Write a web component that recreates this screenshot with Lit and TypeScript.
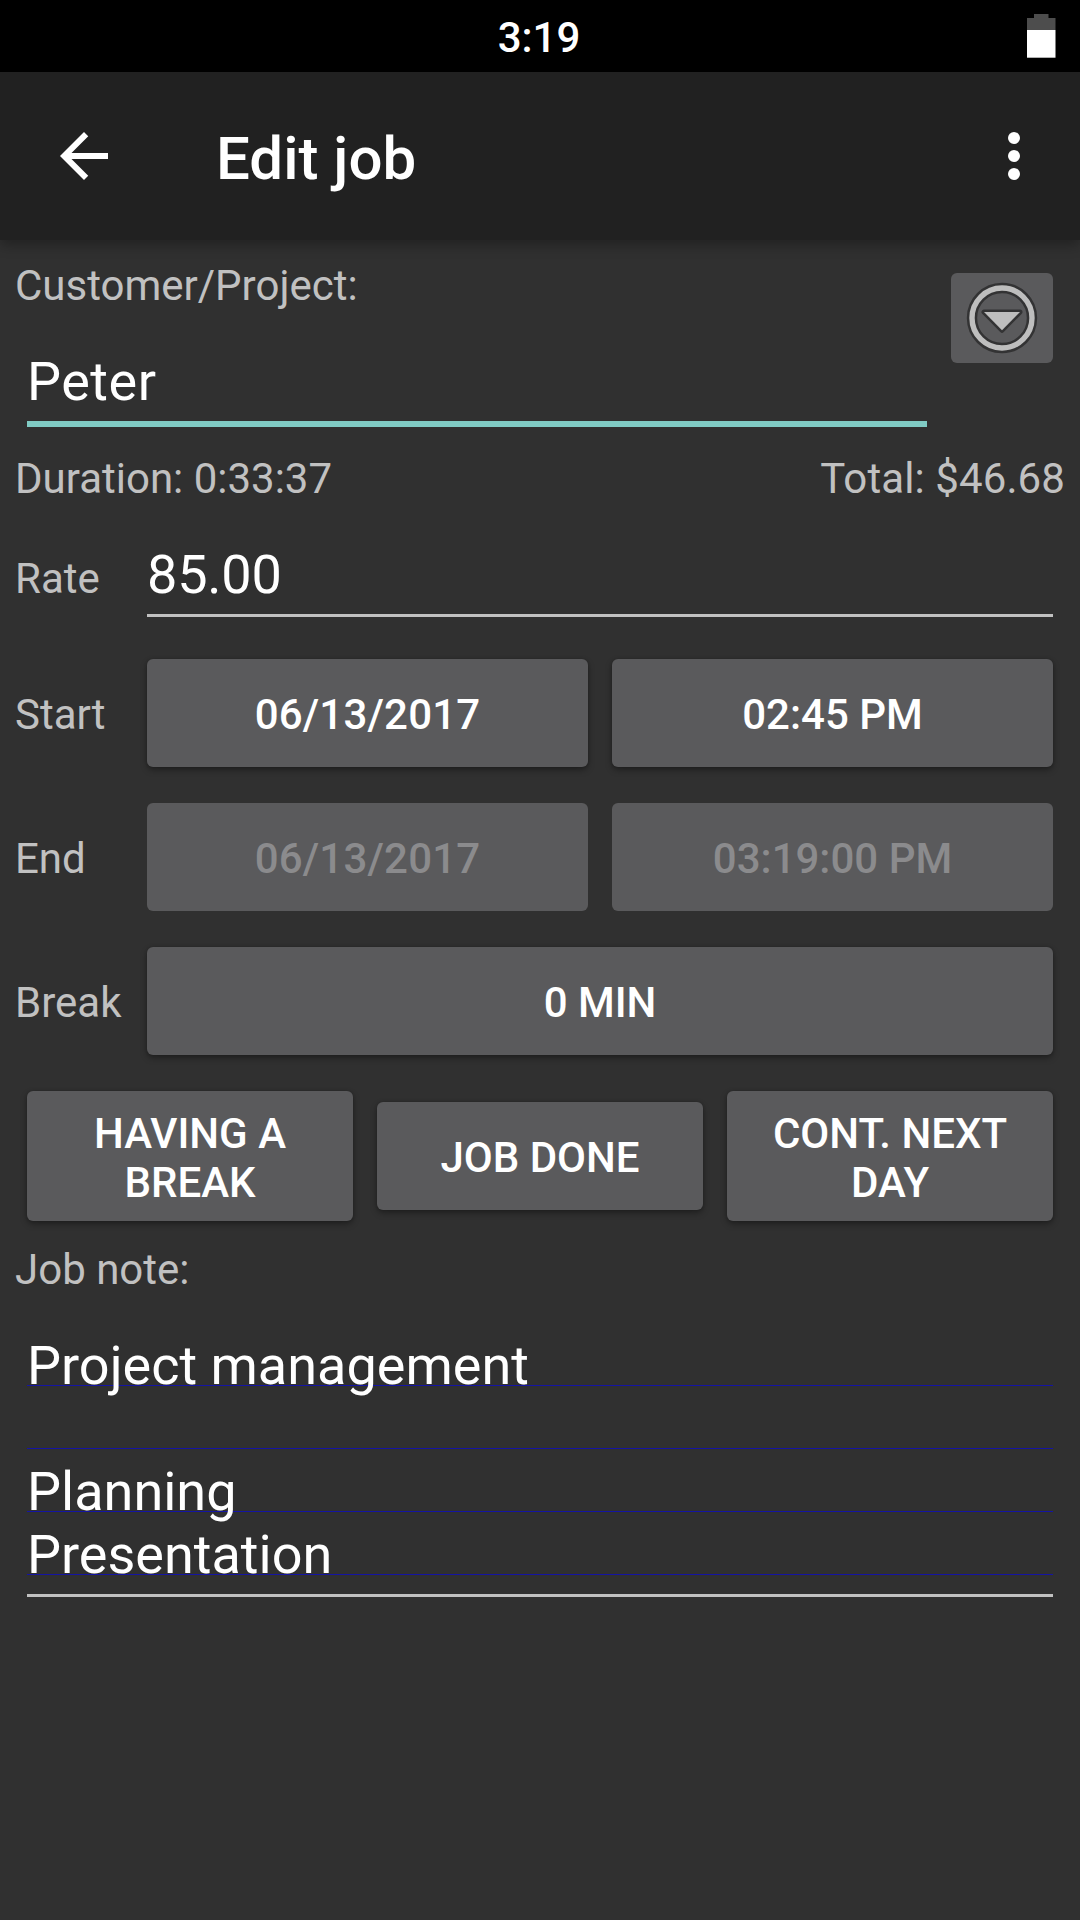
import { LitElement, html, css, svg } from "lit";
import { customElement, property, state } from "lit/decorators.js";
import { classMap } from "lit/directives/class-map.js";

@customElement("status-bar")
class StatusBar extends LitElement {
  @property() time = "";

  static styles = css`
    :host {
      display: grid;
      grid-template-columns: 1fr auto 1fr;
      height: 72px;
      background: #000;
      color: #fff;
      font-weight: 500;
      line-height: 49px;
    }
    .time {
      grid-column: 2;
      padding: 13px 2px 0 0;
    }
    .battery {
      justify-self: end;
      margin: 14px 24px 0 0;
      width: 29px;
      height: 44px;
    }
  `;

  render() {
    return html`
      <span class="time">${this.time}</span>
      <svg class="battery" viewBox="0 0 29 44">
        <path fill="#4d4d4d" d="M7 0h14.5v4h7v12H0V4h7z" />
        <path fill="#fff" d="M0 16h28.5v27.7H0z" />
      </svg>
    `;
  }
}

@customElement("app-bar")
class AppBar extends LitElement {
  @property() heading = "";

  static styles = css`
    :host {
      display: flex;
      align-items: flex-start;
      height: 168px;
      background: #212121;
      color: #fff;
      box-shadow: 0 5px 12px rgba(0, 0, 0, 0.3);
    }
    .icon {
      width: 72px;
      height: 72px;
      margin-top: 48px;
      fill: #fff;
    }
    .back {
      margin-left: 48px;
    }
    .more {
      margin-right: 30px;
    }
    .heading {
      flex: 1;
      margin: 51px 0 0 96px;
      font-size: 60px;
      line-height: 71px;
      font-weight: 500;
    }
  `;

  render() {
    return html`
      <svg class="icon back" viewBox="0 0 24 24">
        <path d="M20 11H7.83l5.59-5.59L12 4l-8 8 8 8 1.41-1.41L7.83 13H20v-2z" />
      </svg>
      <span class="heading">${this.heading}</span>
      <svg class="icon more" viewBox="0 0 24 24">
        ${[6, 12, 18].map((y) => svg`<circle cx="12" cy=${y} r="2" />`)}
      </svg>
    `;
  }
}

@customElement("raised-button")
class RaisedButton extends LitElement {
  @property() label = "";
  @property({ type: Boolean }) disabled = false;

  static styles = css`
    :host {
      display: block;
      flex: 1 1 0;
      min-width: 0;
    }
    .button {
      display: flex;
      align-items: flex-start;
      box-sizing: border-box;
      width: 100%;
      min-height: 108px;
      margin: 0;
      padding: 18px 36px 14px;
      border: 0;
      border-radius: 6px;
      background: #5a5a5c;
      color: #fff;
      font: inherit;
      font-weight: 500;
      line-height: 49px;
      text-align: center;
      text-transform: uppercase;
      box-shadow: 0 3px 6px rgba(0, 0, 0, 0.35), 0 0 3px rgba(0, 0, 0, 0.15);
    }
    .text {
      flex: 1;
      display: flex;
      flex-direction: column;
      justify-content: center;
      min-height: 75px;
    }
    .date {
      letter-spacing: 0.2px;
    }
    .disabled {
      color: #8b8b8d;
      box-shadow: none;
    }
  `;

  render() {
    return html`
      <button
        class=${classMap({ button: true, disabled: this.disabled })}
        ?disabled=${this.disabled}
      >
        <span class=${classMap({ text: true, date: this.label.includes("/") })}>${this.label}</span>
      </button>
    `;
  }
}

interface Row {
  name: string;
  buttons: string[];
  disabled?: boolean;
}

@customElement("app-root")
class AppRoot extends LitElement {
  @state() private rows: Row[] = [
    { name: "Start", buttons: ["06/13/2017", "02:45 PM"] },
    { name: "End", buttons: ["06/13/2017", "03:19:00 PM"], disabled: true },
    { name: "Break", buttons: ["0 min"] },
  ];

  @state() private actions = ["Having a break", "Job done", "Cont. next day"];

  @state() private note = ["Project management", "", "Planning", "Presentation"];

  static styles = css`
    :host {
      display: block;
      width: 1080px;
      height: 1920px;
      overflow: hidden;
      background: #303030;
      color: #c1c1c1;
      font-family: Roboto, "Liberation Sans", sans-serif;
      font-size: 42px;
      line-height: 49px;
    }
    .customer {
      display: flex;
      justify-content: space-between;
      padding: 21px 27px 0 15px;
    }
    .customer-field {
      width: 912px;
    }
    .value {
      color: #fff;
      font-size: 54px;
      line-height: 63px;
      padding-bottom: 8px;
      border-bottom: 3px solid #c1c1c1;
    }
    .focused {
      margin: 40px 0 0 12px;
      border-bottom: 6px solid #80cbc4;
      letter-spacing: 0.5px;
    }
    .picker {
      width: 102px;
      height: 90px;
      margin-top: 12px;
      border-radius: 6px;
      background: #5a5a5c;
    }
    .summary {
      display: flex;
      justify-content: space-between;
      padding: 27px 15px 0;
    }
    .total {
      letter-spacing: 0.1px;
    }
    .row {
      display: flex;
      padding: 0 27px 0 15px;
    }
    .name {
      width: 132px;
      flex: none;
    }
    .rate {
      margin-top: 40px;
    }
    .rate .name {
      padding-top: 11px;
    }
    .rate .value {
      flex: 1;
      letter-spacing: -0.2px;
    }
    .rows {
      display: flex;
      flex-direction: column;
      gap: 36px;
      margin-top: 42px;
    }
    .rows .name {
      padding-top: 31px;
    }
    .buttons {
      flex: 1;
      display: flex;
      gap: 24px;
    }
    .actions {
      display: flex;
      align-items: center;
      gap: 24px;
      padding: 36px 27px 0;
    }
    .note-label {
      padding: 24px 15px 0;
    }
    .note {
      margin: 40px 27px 0;
      padding-bottom: 8px;
      border-bottom: 3px solid #c1c1c1;
      color: #fff;
      font-size: 54px;
      line-height: 63px;
    }
    .line {
      height: 63px;
      white-space: pre;
      background: linear-gradient(#1414a4, #1414a4) 0 51px / 100% 1px no-repeat;
    }
  `;

  render() {
    return html`
      <status-bar time="3:19"></status-bar>
      <app-bar heading="Edit job"></app-bar>
      <div class="customer">
        <div class="customer-field">
          <div>Customer/Project:</div>
          <div class="value focused">Peter</div>
        </div>
        <svg class="picker" viewBox="0 0 102 90">
          <circle cx="51" cy="45" r="30" fill="none" stroke="#333334" stroke-width="10.4" />
          <circle cx="51" cy="45" r="30" fill="none" stroke="#bebebe" stroke-width="5.4" />
          <path
            d="M33 39h36L51 57.3z"
            fill="#333334"
            stroke="#333334"
            stroke-width="5"
            stroke-linejoin="round"
          />
          <path d="M33 39h36L51 57.3z" fill="#bebebe" />
        </svg>
      </div>
      <div class="summary">
        <span>Duration: 0:33:37</span>
        <span class="total">Total: $46.68</span>
      </div>
      <div class="row rate">
        <span class="name">Rate</span>
        <span class="value">85.00</span>
      </div>
      <div class="rows">
        ${this.rows.map(
          (row) => html`
            <div class="row">
              <span class="name">${row.name}</span>
              <div class="buttons">
                ${row.buttons.map(
                  (label) => html`
                    <raised-button label=${label} ?disabled=${row.disabled}></raised-button>
                  `
                )}
              </div>
            </div>
          `
        )}
      </div>
      <div class="actions">
        ${this.actions.map((label) => html`<raised-button label=${label}></raised-button>`)}
      </div>
      <div class="note-label">Job note:</div>
      <div class="note">${this.note.map((text) => html`<div class="line">${text}</div>`)}</div>
    `;
  }
}
